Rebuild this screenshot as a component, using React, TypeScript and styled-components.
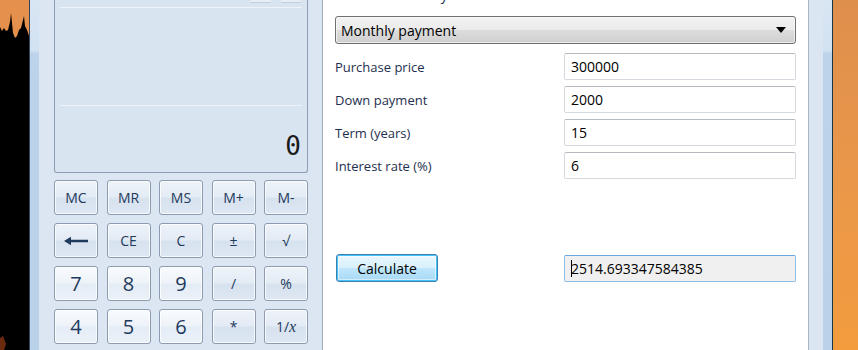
import React from 'react'
import styled, { createGlobalStyle } from 'styled-components'

const GlobalStyle = createGlobalStyle`
  html, body {
    margin: 0;
    padding: 0;
    background: #000;
  }
  body {
    font-family: 'Open Sans', 'Noto Sans', sans-serif;
  }
`

const Screen = styled.div`
  display: flex;
  width: 858px;
  height: 350px;
  overflow: hidden;
`

const Wallpaper = styled.div`
  width: 29px;
  flex: none;
  background: #000;
`

const OrangeWall = styled.div`
  width: 25px;
  flex: none;
  background: linear-gradient(180deg, #df8f4c 0%, #ea974a 50%, #f29c3e 100%);
`

const FrameLine = styled.div<{ $tone: string }>`
  width: 1px;
  flex: none;
  background: ${(p) => p.$tone};
`

const FrameGlass = styled.div`
  width: 9px;
  flex: none;
  background: linear-gradient(180deg, #d8e6f4 0px, #d3e2f1 50px, #bdd3ea 54px, #bad1ea 100%);
`

const Window = styled.div`
  flex: 1;
  display: flex;
  background: #dce6f2;
  padding: 0 14px 0 15px;
`

const Calculator = styled.div`
  width: 254px;
  flex: none;
  display: flex;
  flex-direction: column;
  gap: 7px;
`

const Display = styled.div`
  height: 172px;
  border: 1px solid #8e9db1;
  border-top: 0;
  border-radius: 0 0 3px 3px;
  background: #d9e4f1;
  display: flex;
  flex-direction: column;
  padding: 0 5px;
`

const TopRow = styled.div`
  height: 7px;
  display: flex;
  justify-content: flex-end;
  gap: 10px;
  padding-right: 1px;
  border-bottom: 1px solid #eef3f9;
`

const MiniKey = styled.div`
  width: 20px;
  height: 2px;
  background: #e6edf5;
  border-bottom: 1px solid #c4cfdc;
`

const History = styled.div`
  height: 97px;
  border-bottom: 1px solid #eef3f9;
`

const Readout = styled.div`
  flex: 1;
  display: flex;
  align-items: flex-end;
  justify-content: flex-end;
  padding: 0 1px 12px 0;
  font-family: 'DejaVu Sans Mono', 'Liberation Mono', monospace;
  font-size: 26px;
  line-height: 28px;
  color: #1b1b1b;
`

const Keypad = styled.div`
  display: grid;
  grid-template-columns: repeat(5, 1fr);
  grid-auto-rows: 35px;
  column-gap: 8.5px;
  row-gap: 8px;
`

const Key = styled.button<{ $digit?: boolean }>`
  box-sizing: border-box;
  border: 1px solid #8c9bb0;
  border-radius: 3px;
  padding: 0;
  display: flex;
  align-items: center;
  justify-content: center;
  font-family: 'Open Sans', 'Noto Sans', sans-serif;
  font-size: ${(p) => (p.$digit ? '20px' : '14px')};
  color: #1e3a5c;
  box-shadow: inset 0 0 0 1px rgba(255, 255, 255, 0.75);
  background: ${(p) =>
    p.$digit
      ? 'linear-gradient(180deg, #f8fbfe 0%, #eef3f9 48%, #e4ecf6 52%, #ebf1f8 100%)'
      : 'linear-gradient(180deg, #eef3f9 0%, #e3ebf5 48%, #d7e2ef 52%, #dee7f2 100%)'};

  i {
    font-family: 'Liberation Serif', serif;
    font-size: 16px;
  }
`

const Panel = styled.div`
  box-sizing: border-box;
  width: 487px;
  flex: none;
  margin-left: 14px;
  background: #fff;
  border-left: 1px solid #9eadc0;
  border-right: 1px solid #a9b6c7;
  padding: 0 12px;
  display: flex;
  flex-direction: column;
  color: #1e3050;
`

const Heading = styled.div`
  font-size: 14px;
  line-height: 16px;
  margin-top: -13px;
  height: 16px;
  white-space: nowrap;
`

const Dropdown = styled.div`
  margin-top: 13px;
  height: 28px;
  box-sizing: border-box;
  border: 1px solid #707070;
  border-radius: 3px;
  background: linear-gradient(180deg, #f2f2f2 0%, #ebebeb 50%, #dddddd 51%, #cfcfcf 100%);
  box-shadow: inset 0 0 0 1px rgba(255, 255, 255, 0.6);
  display: flex;
  align-items: center;
  justify-content: space-between;
  padding: 0 9px 0 5px;
  font-size: 14px;
  color: #000;
`

const Form = styled.div`
  display: grid;
  grid-template-columns: 229px 1fr;
  grid-auto-rows: 27px;
  row-gap: 6px;
  margin-top: 9px;
  align-items: center;
`

const Label = styled.div`
  font-size: 13px;
  color: #1e3050;
`

const Field = styled.div<{ $result?: boolean }>`
  box-sizing: border-box;
  height: 27px;
  border: 1px solid ${(p) => (p.$result ? '#8fbde9' : '#d5d9df')};
  border-top-color: ${(p) => (p.$result ? '#6aa6e0' : '#b6bac1')};
  border-radius: 2px;
  background: ${(p) => (p.$result ? '#f0f0f0' : '#fff')};
  display: flex;
  align-items: center;
  padding-left: 6px;
  font-size: 14px;
  color: #000;
`

const Caret = styled.span`
  display: inline-block;
  width: 1px;
  height: 17px;
  background: #000;
  margin-right: -1px;
`

const ResultRow = styled.div`
  display: grid;
  grid-template-columns: 229px 1fr;
  align-items: center;
  margin-top: 75px;
`

const CalcButton = styled.button`
  width: 102px;
  height: 28px;
  margin-left: 1px;
  box-sizing: border-box;
  border: 1px solid #3c7fb1;
  border-radius: 3px;
  padding: 0;
  font-family: 'Open Sans', 'Noto Sans', sans-serif;
  font-size: 14px;
  color: #000;
  background: linear-gradient(180deg, #eaf6fd 0%, #d9f0fc 48%, #bee6fd 52%, #a7d9f5 100%);
  box-shadow: inset 0 0 0 1px #48c3f7, inset 0 0 0 2px rgba(255, 255, 255, 0.5);
`

const BackArrow = () => (
  <svg width="26" height="10" viewBox="0 0 26 10">
    <path d="M1 5 L8 0.8 L8 3.8 L25 3.8 L25 6.2 L8 6.2 L8 9.2 Z" fill="#1e3a5c" />
  </svg>
)

const DropArrow = () => (
  <svg width="10" height="6" viewBox="0 0 10 6">
    <path d="M0 0 H10 L5 6 Z" fill="#000" />
  </svg>
)

const Silhouette = () => (
  <svg width="29" height="350" viewBox="0 0 29 350">
    <rect width="29" height="350" fill="#000" />
    <path
      d="M0 0 H29 V36 L27 30 L25 26 L24 16 L22.5 22 L21 28 L19 30 L17 36 L15 38 L13 33 L11 13 L10 22 L8 30 L6 31 L4 28 L2 31 L0 27 Z"
      fill="#e5904c"
    />
    <path d="M0 338 L3 336 L6 344 L4 350 L0 350 Z" fill="#6a2a10" />
  </svg>
)

const keys: { label: React.ReactNode; digit?: boolean }[] = [
  { label: 'MC' },
  { label: 'MR' },
  { label: 'MS' },
  { label: 'M+' },
  { label: 'M-' },
  { label: <BackArrow /> },
  { label: 'CE' },
  { label: 'C' },
  { label: '±' },
  { label: '√' },
  { label: '7', digit: true },
  { label: '8', digit: true },
  { label: '9', digit: true },
  { label: '/' },
  { label: '%' },
  { label: '4', digit: true },
  { label: '5', digit: true },
  { label: '6', digit: true },
  { label: '*' },
  {
    label: (
      <span>
        1/<i>x</i>
      </span>
    ),
  },
]

const fields = [
  { label: 'Purchase price', value: '300000' },
  { label: 'Down payment', value: '2000' },
  { label: 'Term (years)', value: '15' },
  { label: 'Interest rate (%)', value: '6' },
]

export default function App() {
  return (
    <Screen>
      <GlobalStyle />
      <Wallpaper>
        <Silhouette />
      </Wallpaper>
      <FrameLine $tone="#34475c" />
      <FrameGlass />
      <Window>
        <Calculator>
          <Display>
            <TopRow>
              <MiniKey />
              <MiniKey />
            </TopRow>
            <History />
            <Readout>0</Readout>
          </Display>
          <Keypad>
            {keys.map((k, i) => (
              <Key key={i} $digit={k.digit}>
                {k.label}
              </Key>
            ))}
          </Keypad>
        </Calculator>
        <Panel>
          <Heading>Select the value you want to calculate</Heading>
          <Dropdown>
            <span>Monthly payment</span>
            <DropArrow />
          </Dropdown>
          <Form>
            {fields.map((f) => (
              <React.Fragment key={f.label}>
                <Label>{f.label}</Label>
                <Field>{f.value}</Field>
              </React.Fragment>
            ))}
          </Form>
          <ResultRow>
            <CalcButton>Calculate</CalcButton>
            <Field $result>
              <Caret />
              2514.693347584385
            </Field>
          </ResultRow>
        </Panel>
      </Window>
      <FrameGlass />
      <FrameLine $tone="#143848" />
      <OrangeWall />
    </Screen>
  )
}
